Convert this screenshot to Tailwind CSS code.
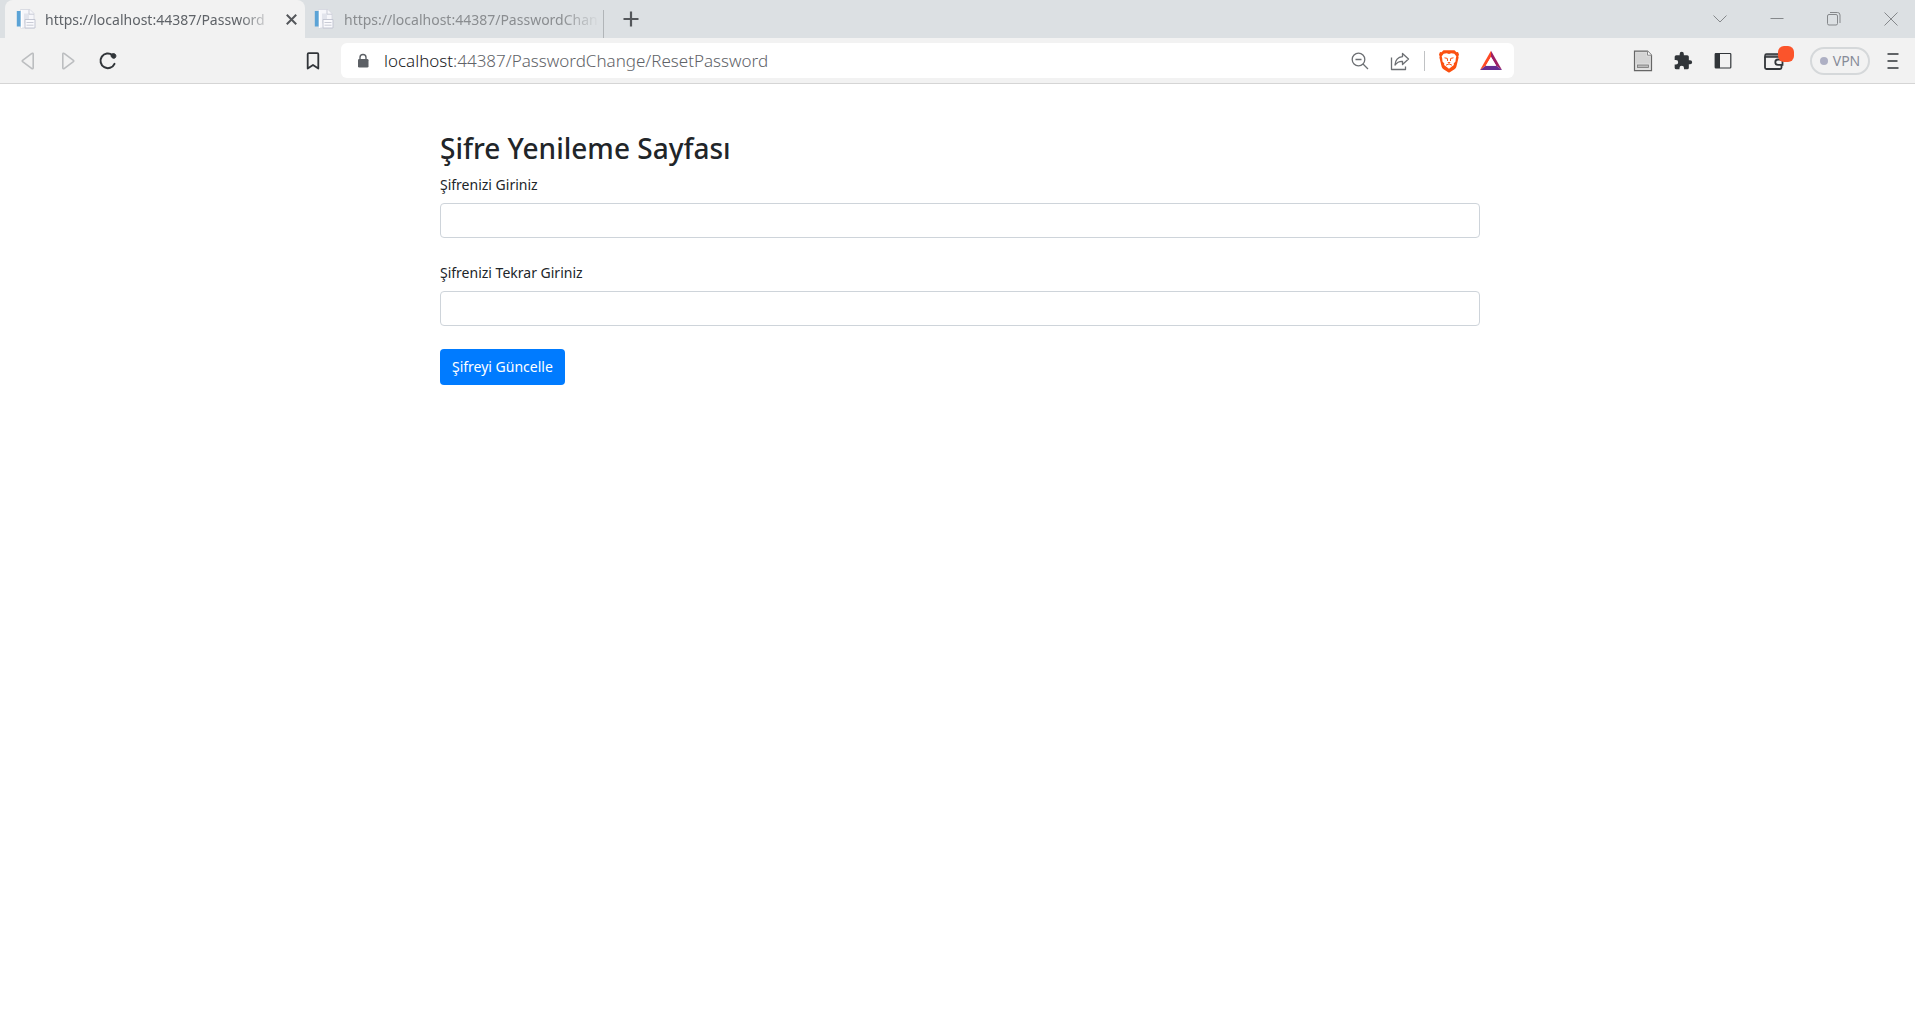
<!DOCTYPE html>
<html lang="tr">
<head>
<meta charset="utf-8">
<title>Şifre Yenileme Sayfası</title>
<script src="https://cdn.jsdelivr.net/npm/@tailwindcss/browser@4"></script>
</head>
<body class="min-h-screen bg-white font-['Noto_Sans','Open_Sans',sans-serif] text-[#212529]">
<svg class="hidden">
  <symbol id="favicon" viewBox="0 0 20 20">
    <path d="M4.500.500h9.500l4 4v14.500H4.500z" fill="#f6f6fa" stroke="#d3d6de" stroke-width=".8"/>
    <path d="M.8 2h4v15.500h-4z" fill="#5ba3d6"/>
    <path d="M5.500 1v18" stroke="#fff" stroke-width="1.400"/>
    <path d="M8 4.500h5v10H8z" fill="#e2e4ec"/>
    <path d="M9 10.500h10v8.500H9z" fill="#fafafd" stroke="#c3c6d2"/>
    <path d="M10.500 13.500h7M10.500 16.200h7" stroke="#c9cbd6"/>
    <path d="M13 .8v4.400h5" fill="none" stroke="#c9cbd6"/>
  </symbol>
</svg>

<header>
  <!-- Tab strip -->
  <div class="flex h-[38px] items-stretch bg-[#dce0e3] pl-[5px]">
    <div class="flex w-[300px] items-center rounded-t-lg bg-[#f2f2f2] pr-2 pl-[11px]">
      <svg class="size-5 shrink-0"><use href="#favicon"/></svg>
      <a href="#" class="ml-[9px] w-[229px] shrink-0 whitespace-nowrap text-[14px] text-[#5f6368] [mask-image:linear-gradient(to_right,black_85%,transparent)]">https://localhost:44387/Password</a>
      <button aria-label="Sekmeyi kapat" class="ml-[9px] flex size-4 shrink-0 items-center justify-center">
        <svg class="size-[11px]" viewBox="0 0 10 10" fill="none" stroke="#54575b" stroke-width="1.800"><path d="M.7.700l8.600 8.600M9.300.700L.7 9.300"/></svg>
      </button>
    </div>
    <div class="flex w-[299px] items-center pl-[9px]">
      <svg class="size-5 shrink-0"><use href="#favicon"/></svg>
      <a href="#" class="ml-[10px] w-[256px] shrink-0 whitespace-nowrap text-[14px] text-[#8a8d90] [mask-image:linear-gradient(to_right,black_85%,transparent)]">https://localhost:44387/PasswordChan</a>
      <span class="ml-auto h-7 w-px self-end bg-[#b1b5b8]"></span>
    </div>
    <button aria-label="Yeni sekme" class="ml-[19px] flex w-4 items-center justify-center">
      <svg class="size-4" viewBox="0 0 16 16" stroke="#54575b" stroke-width="2.200"><path d="M8 .5v15M.5 8h15"/></svg>
    </button>
    <div class="ml-auto flex items-center gap-[41px] pr-4 text-[#85888b]">
      <button aria-label="Sekmelerde ara"><svg class="size-4" viewBox="0 0 16 16" fill="none" stroke="currentColor"><path d="M1.500 4.500L8 11l6.500-6.500"/></svg></button>
      <button aria-label="Simge durumuna küçült"><svg class="size-4" viewBox="0 0 16 16" stroke="currentColor"><path d="M1.500 7.500h13"/></svg></button>
      <button aria-label="Önceki boyut"><svg class="size-4" viewBox="0 0 16 16" fill="none" stroke="currentColor"><rect x="1.500" y="3.500" width="10" height="10.500" rx="1.500"/><path d="M4 1.500h7.500a2.500 2.500 0 0 1 2.500 2.500v8"/></svg></button>
      <button aria-label="Kapat"><svg class="size-4" viewBox="0 0 16 16" fill="none" stroke="currentColor"><path d="M1.500 1.500l13 13M14.500 1.500l-13 13"/></svg></button>
    </div>
  </div>

  <!-- Toolbar -->
  <div class="flex h-[46px] items-center border-b border-[#d5d5d5] bg-[#f2f2f2]">
    <div class="flex w-[341px] shrink-0 items-center px-[18px]">
      <button aria-label="Geri"><svg class="size-5" viewBox="0 0 20 20" fill="none" stroke="#bcbec0" stroke-width="1.600" stroke-linejoin="round"><path d="M15.200 3v14a.8.8 0 0 1-1.300.6L4.600 10.700a.9.900 0 0 1 0-1.400l9.300-6.900a.8.8 0 0 1 1.300.6z"/></svg></button>
      <button aria-label="İleri" class="ml-5"><svg class="size-5" viewBox="0 0 20 20" fill="none" stroke="#bcbec0" stroke-width="1.600" stroke-linejoin="round"><path d="M4.800 3v14a.8.8 0 0 0 1.300.6l9.300-6.900a.9.900 0 0 0 0-1.400L6.100 2.400a.8.8 0 0 0-1.300.6z"/></svg></button>
      <button aria-label="Yenile" class="ml-5"><svg class="size-5" viewBox="0 0 20 20" fill="none" stroke="#313539" stroke-width="2" stroke-linecap="round"><path d="M14.500 4.200a7.300 7.300 0 1 0 2 8.600"/><path d="M13.500 3.200c1-1.100 4-.6 4.300 1 .4 2-.8 3.500-2.600 3-1.600-.5-3-2.500-1.700-4z" fill="#313539" stroke-width="1"/></svg></button>
      <button aria-label="Yer işareti ekle" class="ml-auto"><svg class="size-5" viewBox="0 0 20 20" fill="none" stroke="#313539" stroke-width="1.800" stroke-linejoin="round"><path d="M4.700 3.200a1 1 0 0 1 1-1h8.600a1 1 0 0 1 1 1v14.300L10 14l-5.300 3.500z"/></svg></button>
    </div>

    <div class="flex h-[35px] min-w-0 flex-1 items-center rounded-md bg-white pr-3 pl-[14px]">
      <svg class="size-4 shrink-0" viewBox="0 0 16 16"><path d="M5 7V4.500a3 3 0 0 1 6 0V7" fill="none" stroke="#5c6065" stroke-width="1.400"/><rect x="3" y="6" width="10.500" height="8.500" rx="1.300" fill="#5c6065"/></svg>
      <a href="#" class="ml-[13px] text-[17px] leading-6 font-light whitespace-nowrap text-[#5f6368]"><span class="text-[#202124]">localhost</span>:44387/PasswordChange/ResetPassword</a>
      <div class="ml-auto flex items-center">
        <button aria-label="Uzaklaştır"><svg class="size-5" viewBox="0 0 20 20" fill="none" stroke="#6c6f73" stroke-width="1.300"><circle cx="8.500" cy="8.500" r="6.300"/><path d="M5.500 8.500h6M13 13l5 5"/></svg></button>
        <button aria-label="Paylaş" class="ml-5"><svg class="size-5" viewBox="0 0 20 20" fill="none" stroke="#6c6f73" stroke-width="1.300" stroke-linejoin="round"><path d="M1.500 6.500v12h14v-3"/><path d="M12.500 2.500l6 5.500-6 5.500v-3.200c-3.500-.2-5.500 1-7.500 3.700.3-4.600 3-7.800 7.500-8.300z"/></svg></button>
        <span class="ml-[14px] h-5 w-px bg-[#c0c2c4]"></span>
        <button aria-label="Brave kalkanları" class="ml-[13px]"><svg class="h-6 w-[22px]" viewBox="0 0 22 24"><path d="M5.500 1.200h11l2 2 1.500-.2 1 2.500-.7 2 .3 1-2.300 9.500c-.3 1-1 1.600-1.800 2.200L11.800 23.300a1.300 1.300 0 0 1-1.600 0L5.500 20.200c-.8-.6-1.500-1.200-1.800-2.200L1.400 8.500l.3-1-.7-2L2 3l1.500.2z" fill="#fb5010"/><path d="M11 5l2.300-.8 3 .6 2 2.500-.5 2.200-.3 3-1.800 2 .2 1.500-4.900 3.700L6.100 16l.2-1.500-1.800-2-.3-3-.5-2.200 2-2.500 3-.6z" fill="#fff"/><path d="M6.500 8.800l2.800.6.300 2.600M15.500 8.800l-2.800.6-.3 2.600M8 16.200l3-1.300 3 1.300" fill="none" stroke="#fb5010"/><path d="M9.300 13h3.400L11 14.400z" fill="#fb5010"/></svg></button>
        <button aria-label="Brave ödülleri" class="ml-5"><svg class="size-[22px]" viewBox="0 0 22 22"><path d="M11 .8V7L5.800 15.800 0 20z" fill="#ff4a24"/><path d="M11 .8V7l5.200 8.800L22 20z" fill="#9e1f63"/><path d="M0 20l5.800-4.200h10.400L22 20z" fill="#662d91"/><path d="M11 7l5.200 8.800H5.800z" fill="#fff"/></svg></button>
      </div>
    </div>

    <div class="flex w-[401px] shrink-0 items-center justify-end pr-[13px]">
      <button aria-label="Belge"><svg class="h-[22px] w-5" viewBox="0 0 20 22"><path d="M1.500 1.200h13l4 4v15.500h-17z" fill="#e0e0e0" stroke="#666" stroke-width="1.200"/><path d="M2.500 2.500h11v4h4v7h-15z" fill="#d4d4d4"/><path d="M14.500 1.200v4h4" fill="#fff" stroke="#888"/><rect x="4.500" y="15" width="11" height="2.500" fill="#bbb" stroke="#777" stroke-width=".8"/></svg></button>
      <button aria-label="Uzantılar" class="ml-5"><svg class="size-5" viewBox="0 0 24 24" fill="#313539"><path d="M20.500 11H19V7a2 2 0 0 0-2-2h-4V3.500a2.500 2.500 0 0 0-5 0V5H4a2 2 0 0 0-2 2v3.800h1.500a2.700 2.700 0 0 1 0 5.400H2V20a2 2 0 0 0 2 2h3.800v-1.500a2.700 2.700 0 0 1 5.400 0V22H17a2 2 0 0 0 2-2v-4h1.500a2.500 2.500 0 0 0 0-5z"/></svg></button>
      <button aria-label="Kenar çubuğu" class="ml-5"><svg class="size-5" viewBox="0 0 20 20"><rect x="2.200" y="2.500" width="15.600" height="14.500" rx=".8" fill="none" stroke="#313539" stroke-width="1.200"/><path d="M2 2.500h5v14.500H2z" fill="#313539"/></svg></button>
      <button aria-label="Cüzdan" class="relative ml-[30px]"><svg class="size-[22px]" viewBox="0 0 22 22" fill="none" stroke="#313539" stroke-width="1.800"><path d="M2 6.500v11a1.500 1.500 0 0 0 1.500 1.500h13.500a1.500 1.500 0 0 0 1.500-1.500V15M18.500 9V6.500"/><path d="M2 7V5.500A1.500 1.500 0 0 1 3.500 4h13a2 2 0 0 1 2 2v1z" fill="#85878a" stroke-width="1.500"/><path d="M19.500 9.500H15a2.700 2.700 0 0 0 0 5.400h4.500z"/></svg>
        <span class="absolute -top-1 left-[15px] size-4 rounded-[6px] bg-[#fb542b]"></span></button>
      <button class="ml-[25px] flex h-7 w-[60px] items-center justify-center gap-[5px] rounded-full border-2 border-[#d5d8da] text-[14px] leading-5 text-[#868b98]"><span class="size-2 rounded-full bg-[#aeb0c4]"></span>VPN</button>
      <button aria-label="Menü" class="ml-[14px]"><svg class="size-[18px]" viewBox="0 0 18 18" stroke="#313539" stroke-width="1.600"><path d="M3.500 2h11M3.500 9h10M3.500 16h11"/></svg></button>
    </div>
  </div>
</header>

<main class="pl-[5px]">
  <form class="mx-auto max-w-[1040px] pt-[46px] text-[14px] leading-[22px]">
    <h1 class="mb-2 text-[28px] leading-9 font-medium">Şifre Yenileme Sayfası</h1>
    <label for="sifre" class="mb-[7px] block">Şifrenizi Giriniz</label>
    <input id="sifre" type="password" class="block h-[35px] w-full rounded-[4px] border border-[#ced4da] px-3">
    <label for="sifre2" class="mt-6 mb-[7px] block">Şifrenizi Tekrar Giriniz</label>
    <input id="sifre2" type="password" class="block h-[35px] w-full rounded-[4px] border border-[#ced4da] px-3">
    <button type="button" class="mt-[23px] block h-9 rounded-[4px] bg-[#007bff] px-3 text-white">Şifreyi Güncelle</button>
  </form>
</main>
</body>
</html>
